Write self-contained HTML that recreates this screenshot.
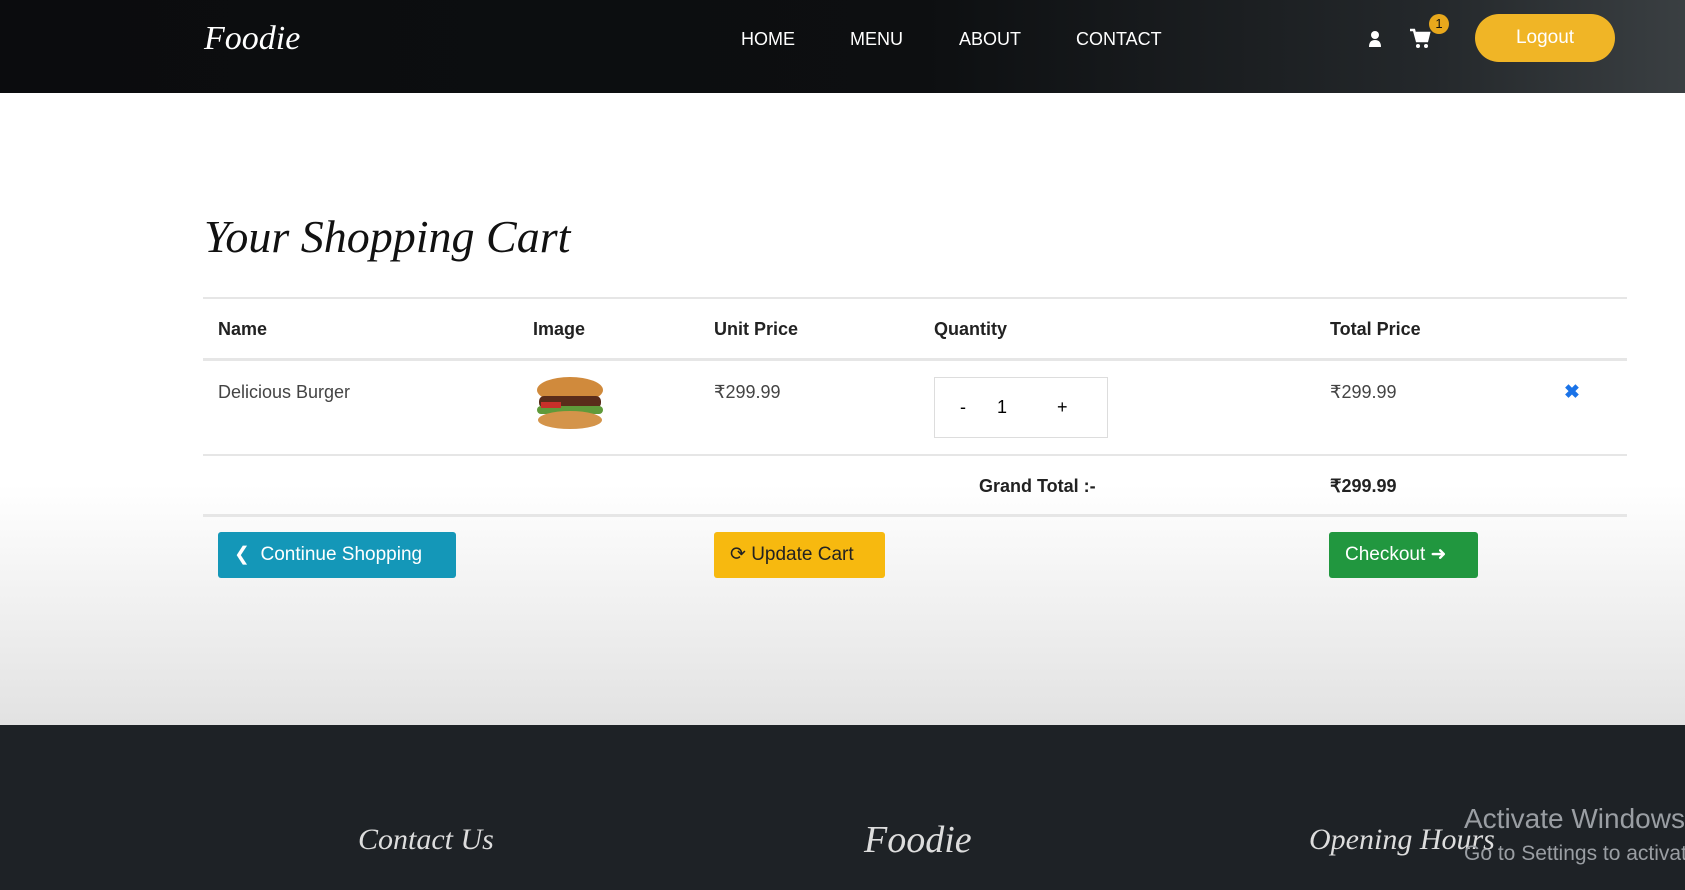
<!DOCTYPE html>
<html><head><meta charset="utf-8"><style>
*{margin:0;padding:0;box-sizing:border-box}
body{width:1685px;height:890px;overflow:hidden;font-family:"Liberation Sans",sans-serif;position:relative;background:#fff}
.nav{position:absolute;left:0;top:0;width:1685px;height:93px;background:linear-gradient(90deg,#0b0c0e 0%,#0d0f11 55%,#24282b 85%,#3a3f42 100%)}
.abs{position:absolute;white-space:nowrap}
.logo{font-family:"Liberation Serif",serif;font-style:italic;color:#fff}
.nl{color:#fff;font-size:18px;top:29px}
.main{position:absolute;left:0;top:93px;width:1685px;height:632px;background:linear-gradient(180deg,#fff 0%,#fff 62%,#e2e2e2 100%)}
.line{position:absolute;left:203px;width:1424px;height:2px;background:#e6e6e6}
.th{font-weight:bold;font-size:18px;color:#222;top:319px}
.td{font-size:18px;color:#444;top:382px}
.btn{position:absolute;top:532px;height:46px;border-radius:3px;font-size:19px;line-height:46px;color:#fff;padding-left:16px}
.foot{position:absolute;left:0;top:725px;width:1685px;height:165px;background:#1e2226}
.fh{font-family:"Liberation Serif",serif;font-style:italic;color:#ddd;font-size:30px;top:823px}
</style></head><body>
<div class="nav">
<div class="abs logo" style="left:204px;top:20px;font-size:34px">Foodie</div>
<div class="abs nl" style="left:741px">HOME</div>
<div class="abs nl" style="left:850px">MENU</div>
<div class="abs nl" style="left:959px">ABOUT</div>
<div class="abs nl" style="left:1076px">CONTACT</div>
<svg class="abs" style="left:1368px;top:30px" width="14" height="18" viewBox="0 0 14 18"><circle cx="7" cy="5" r="4" fill="#fff"/><path d="M1 17 Q1 10 7 10 Q13 10 13 17Z" fill="#fff"/></svg>
<svg class="abs" style="left:1409px;top:28px" width="22" height="22" viewBox="0 0 22 22"><path d="M1 2h4l3 11h10l2-8H7" fill="none" stroke="#fff" stroke-width="2.5"/><rect x="7" y="5" width="12" height="7" fill="#fff"/><circle cx="9" cy="18" r="2" fill="#fff"/><circle cx="17" cy="18" r="2" fill="#fff"/></svg>
<div class="abs" style="left:1429px;top:14px;width:20px;height:20px;border-radius:50%;background:#e8a81c;color:#111;font-size:13px;text-align:center;line-height:20px">1</div>
<div class="abs" style="left:1475px;top:14px;width:140px;height:48px;border-radius:24px;background:#f0b526;color:#fff;font-size:19px;text-align:center;line-height:48px">Logout</div>
</div>
<div class="main"></div>
<div class="abs logo" style="left:204px;top:210px;font-size:46px;color:#111">Your Shopping Cart</div>
<div class="line" style="top:297px"></div>
<div class="abs th" style="left:218px">Name</div>
<div class="abs th" style="left:533px">Image</div>
<div class="abs th" style="left:714px">Unit Price</div>
<div class="abs th" style="left:934px">Quantity</div>
<div class="abs th" style="left:1330px">Total Price</div>
<div class="line" style="top:358px;height:3px"></div>
<div class="abs td" style="left:218px">Delicious Burger</div>
<svg class="abs" style="left:533px;top:376px" width="74" height="56" viewBox="0 0 74 56"><ellipse cx="37" cy="14" rx="33" ry="13" fill="#d08a3c"/><rect x="6" y="20" width="62" height="12" rx="5" fill="#5a2c1a"/><rect x="4" y="30" width="66" height="8" rx="4" fill="#5f9a3a"/><rect x="8" y="26" width="20" height="6" fill="#c8302a"/><ellipse cx="37" cy="44" rx="32" ry="9" fill="#d4944a"/></svg>
<div class="abs td" style="left:714px">₹299.99</div>
<div class="abs" style="left:934px;top:377px;width:174px;height:61px;border:1px solid #ddd;background:#fff"></div>
<div class="abs" style="left:960px;top:397px;font-size:18px">-</div>
<div class="abs" style="left:997px;top:397px;font-size:18px">1</div>
<div class="abs" style="left:1057px;top:397px;font-size:18px">+</div>
<div class="abs td" style="left:1330px">₹299.99</div>
<div class="abs" style="left:1564px;top:381px;font-size:19px;color:#1a73e8;font-weight:bold">✖</div>
<div class="line" style="top:454px"></div>
<div class="abs th" style="left:979px;top:476px">Grand Total :-</div>
<div class="abs th" style="left:1330px;top:476px">₹299.99</div>
<div class="line" style="top:514px;height:3px"></div>
<div class="btn" style="left:218px;width:238px;background:#1497b8">&#10094;&nbsp; Continue Shopping</div>
<div class="btn" style="left:714px;width:171px;background:#f7b90f;color:#222">⟳ Update Cart</div>
<div class="btn" style="left:1329px;width:149px;background:#21973f">Checkout ➜</div>
<div class="foot"></div>
<div class="abs fh" style="left:358px">Contact Us</div>
<div class="abs fh" style="left:864px;font-size:38px;top:818px">Foodie</div>
<div class="abs fh" style="left:1309px">Opening Hours</div>
<div class="abs" style="left:1464px;top:803px;font-size:28px;color:#9a9ea3">Activate Windows</div>
<div class="abs" style="left:1464px;top:842px;font-size:21px;color:#9a9ea3">Go to Settings to activate</div>
</body></html>
